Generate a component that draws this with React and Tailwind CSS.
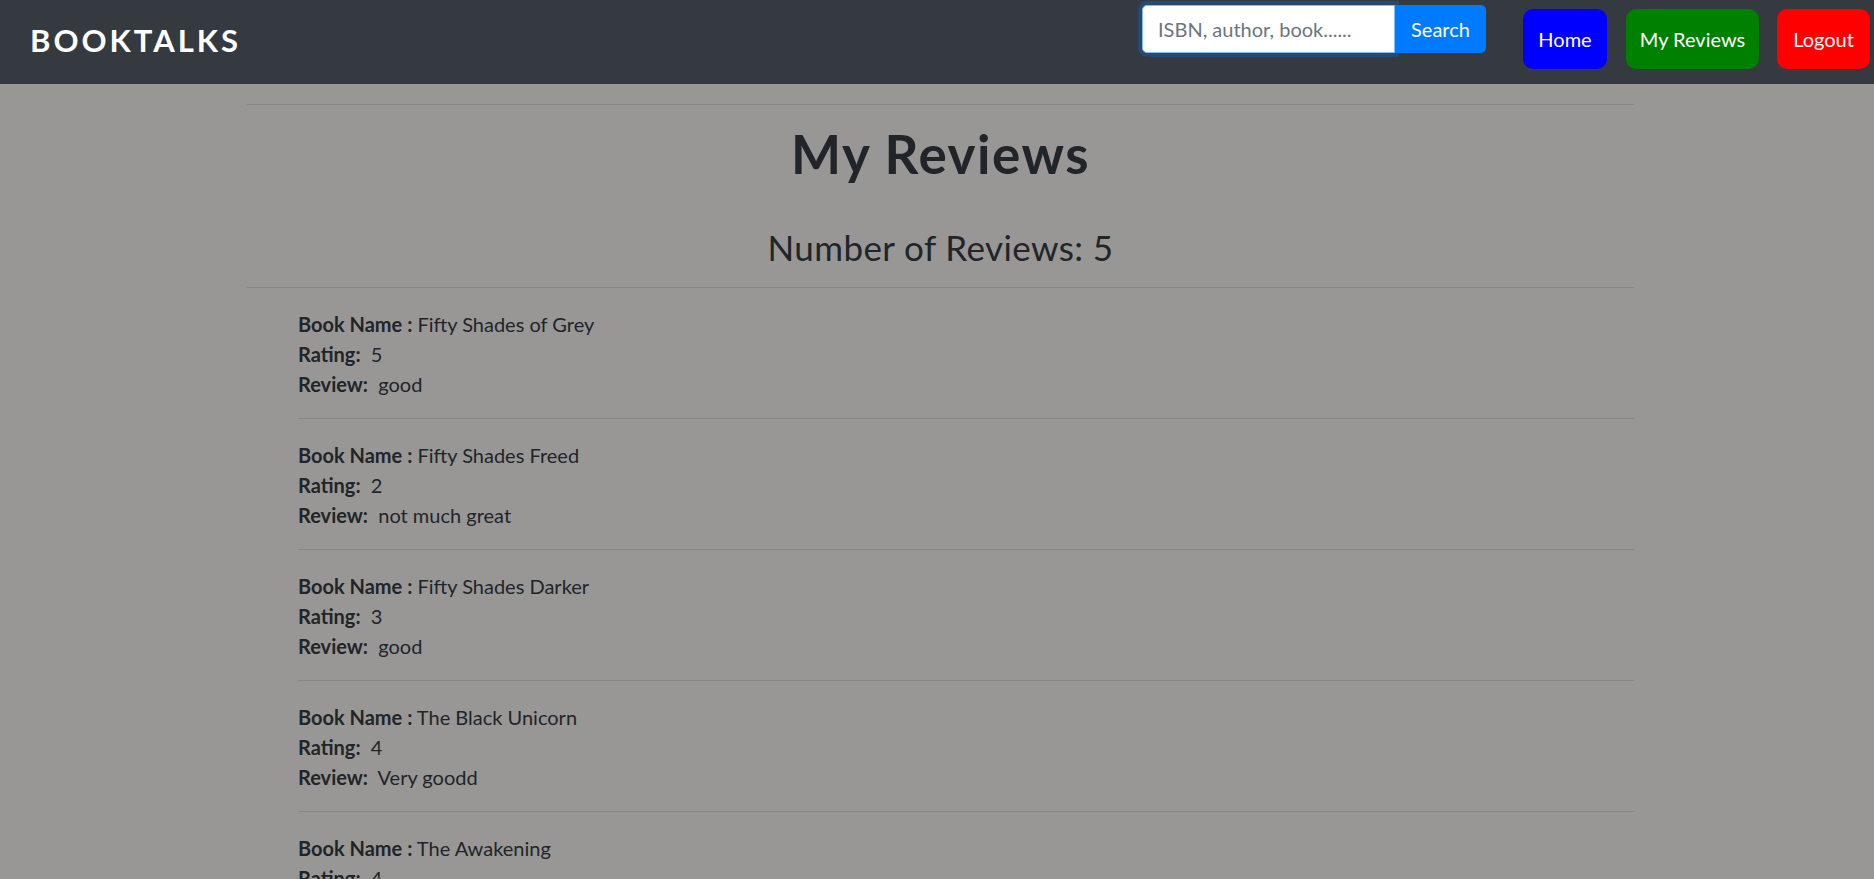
import React from "react";

const reviews = [
  { book: "Fifty Shades of Grey", rating: 5, text: "good" },
  { book: "Fifty Shades Freed", rating: 2, text: "not much great" },
  { book: "Fifty Shades Darker", rating: 3, text: "good" },
  { book: "The Black Unicorn", rating: 4, text: "Very goodd" },
  { book: "The Awakening", rating: 4, text: "good" },
];

function Navbar() {
  return (
    <nav className="flex h-[84px] items-start bg-[#343a40] pl-[30px] pr-[4px]">
      <span className="mt-[20px] text-[31px] font-bold leading-[40px] tracking-[3px] text-white">
        BOOKTALKS
      </span>
      <form className="ml-auto mt-[5px] flex" onSubmit={(e) => e.preventDefault()}>
        <input
          type="text"
          placeholder="ISBN, author, book......"
          className="h-[48px] w-[253px] rounded-l-[5px] border border-[#80bdff] bg-white px-[15px] text-[20px] text-[#495057] placeholder-[#6c757d] shadow-[0_0_0_4px_rgba(0,123,255,0.25)] outline-none"
        />
        <button
          type="submit"
          className="h-[48px] w-[91px] rounded-r-[5px] bg-[#007bff] text-[20px] text-white"
        >
          Search
        </button>
      </form>
      <button className="ml-[37px] mt-[9px] h-[60px] w-[84px] rounded-[10px] bg-[#0000ff] text-[20px] text-white">
        Home
      </button>
      <button className="ml-[19px] mt-[9px] h-[60px] w-[133px] rounded-[10px] bg-[#008000] text-[20px] text-white">
        My Reviews
      </button>
      <button className="ml-[18px] mt-[9px] h-[60px] w-[93px] rounded-[10px] bg-[#ff0000] text-[20px] text-white">
        Logout
      </button>
    </nav>
  );
}

export default function App() {
  return (
    <div className="h-screen overflow-hidden bg-[#989796] font-['Segoe_UI',Lato,'Liberation_Sans',sans-serif] text-[#212529]">
      <Navbar />
      <div className="ml-[247px] w-[1387px]">
        <hr className="mt-[20px] border-t border-black/10" />
        <h1 className="mt-[19px] text-center text-[53px] font-bold leading-[60px] tracking-[1.5px]">
          My Reviews
        </h1>
        <h3 className="mt-[42px] text-center text-[35px] leading-[42px] tracking-[0.4px]">
          Number of Reviews: 5
        </h3>
        <hr className="mt-[19px] border-t border-black/10" />
        <ul className="pl-[51px] pt-[21px]">
          {reviews.map((r, i) => (
            <li key={i} className="text-[20px] leading-[30px]">
              <div>
                <b>Book Name :</b> {r.book}
              </div>
              <div>
                <b>Rating:</b>&nbsp; {r.rating}
              </div>
              <div>
                <b>Review:</b>&nbsp; {r.text}
              </div>
              <hr className="mb-[21px] mt-[19px] border-t border-black/10" />
            </li>
          ))}
        </ul>
      </div>
    </div>
  );
}
